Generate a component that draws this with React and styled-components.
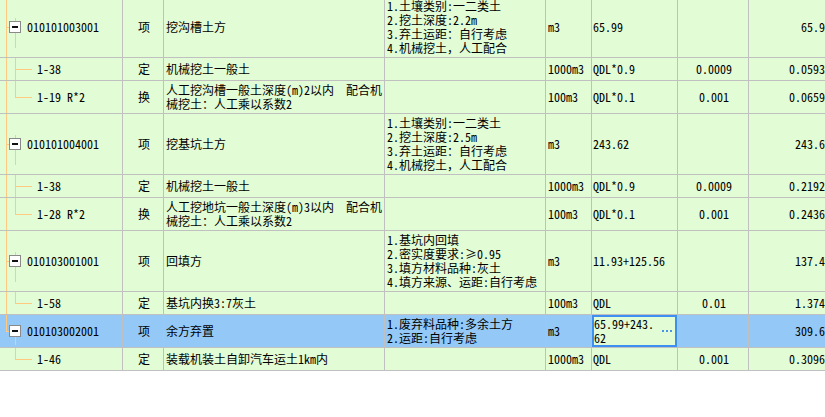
import React from "react";
import styled, { createGlobalStyle } from "styled-components";

const GlobalStyle = createGlobalStyle`
  *, *::before, *::after { box-sizing: border-box; }
  html, body { margin: 0; padding: 0; background: #ffffff; }
  body { overflow: hidden; }
`;

const FONT = `"Noto Sans Mono CJK SC", "Noto Sans CJK SC", "Liberation Mono", monospace`;
const GRID_LINE = "#c0c0c0";
const TREE = "#ffc97f";
const GREEN = "#e2fcd6";
const SELECTED = "#94c9f7";

const Viewport = styled.div`
  width: 825px;
  height: 417px;
  overflow: hidden;
  background: #ffffff;
  font-family: ${FONT};
  font-size: 12px;
  line-height: 14px;
  color: #000000;
`;

const Sheet = styled.div`
  width: 834px;
  margin-top: -3px;
`;

const Row = styled.div`
  display: grid;
  grid-template-columns: 123px 41px 221px 161px 46px 86px 71px 85px;
  border-bottom: 1px solid ${GRID_LINE};
  background: ${(p) => (p.$selected ? SELECTED : GREEN)};
`;

const Cell = styled.div`
  display: flex;
  align-items: center;
  justify-content: ${(p) =>
    p.$align === "center" ? "center" : p.$align === "right" ? "flex-end" : "flex-start"};
  min-height: 22px;
  padding: 2px ${(p) => (p.$align === "right" ? "2px" : "0")} 2px ${(p) => p.$padLeft ?? 2}px;
  border-right: 1px solid ${GRID_LINE};
  white-space: pre-wrap;
  overflow: hidden;
`;

const line = `linear-gradient(${TREE}, ${TREE})`;

function treeLayers(p) {
  const layers = [];
  if (p.$level === 0) {
    layers.push([`6px 0`, p.$lastRoot ? `1px 50%` : `1px 100%`]);
    layers.push([`6px 50%`, `3px 1px`]);
    if (p.$hasChildren) layers.push([`15px calc(50% + 6px)`, `1px 50%`]);
  } else {
    if (!p.$lastRoot) layers.push([`6px 0`, `1px 100%`]);
    layers.push([`15px 0`, p.$lastChild ? `1px 50%` : `1px 100%`]);
    layers.push([`15px 50%`, `17px 1px`]);
  }
  return `
    background-image: ${layers.map(() => line).join(", ")};
    background-position: ${layers.map((l) => l[0]).join(", ")};
    background-size: ${layers.map((l) => l[1]).join(", ")};
    background-repeat: no-repeat;
  `;
}

const CodeCell = styled(Cell)`
  padding-left: ${(p) => (p.$level === 0 ? "9px" : "37px")};
  ${(p) => treeLayers(p)}
`;

const Toggle = styled.span`
  flex: none;
  width: 12px;
  height: 12px;
  margin-right: 6px;
  border: 1px solid #8a8a8a;
  background: #ffffff;
  display: flex;
  align-items: center;
  justify-content: center;
  &::after {
    content: "";
    width: 6px;
    height: 2px;
    background: #111111;
  }
`;

const Editor = styled.div`
  flex: 1;
  align-self: stretch;
  display: flex;
  align-items: center;
  justify-content: space-between;
  margin: -2px 0;
  padding: 0 3px 0 0;
  border: 2px solid #3d8ff2;
  background: ${GREEN};
`;

const EditorText = styled.span`
  width: 62px;
  word-break: break-all;
  white-space: normal;
`;

const MoreDots = styled.span`
  display: flex;
  gap: 2px;
  align-self: center;
`;

const Dot = styled.i`
  width: 2px;
  height: 2px;
  background: #4a92ea;
`;

const rows = [
  {
    level: 0, code: "010101003001", type: "项", name: "挖沟槽土方",
    feat: "1.土壤类别:一二类土\n2.挖土深度:2.2m\n3.弃土运距：自行考虑\n4.机械挖土，人工配合",
    unit: "m3", expr: "65.99", qty: "", total: "65.99", hasChildren: true,
  },
  { level: 1, code: "1-38", type: "定", name: "机械挖土一般土", feat: "", unit: "1000m3", expr: "QDL*0.9", qty: "0.0009", total: "0.05939" },
  {
    level: 1, code: "1-19 R*2", type: "换", name: "人工挖沟槽一般土深度(m)2以内  配合机\n械挖土：人工乘以系数2",
    feat: "", unit: "100m3", expr: "QDL*0.1", qty: "0.001", total: "0.06599", lastChild: true,
  },
  {
    level: 0, code: "010101004001", type: "项", name: "挖基坑土方",
    feat: "1.土壤类别:一二类土\n2.挖土深度:2.5m\n3.弃土运距：自行考虑\n4.机械挖土，人工配合",
    unit: "m3", expr: "243.62", qty: "", total: "243.62", hasChildren: true,
  },
  { level: 1, code: "1-38", type: "定", name: "机械挖土一般土", feat: "", unit: "1000m3", expr: "QDL*0.9", qty: "0.0009", total: "0.21926" },
  {
    level: 1, code: "1-28 R*2", type: "换", name: "人工挖地坑一般土深度(m)3以内  配合机\n械挖土：人工乘以系数2",
    feat: "", unit: "100m3", expr: "QDL*0.1", qty: "0.001", total: "0.24362", lastChild: true,
  },
  {
    level: 0, code: "010103001001", type: "项", name: "回填方",
    feat: "1.基坑内回填\n2.密实度要求:≥0.95\n3.填方材料品种:灰土\n4.填方来源、运距:自行考虑",
    unit: "m3", expr: "11.93+125.56", qty: "", total: "137.49", hasChildren: true,
  },
  { level: 1, code: "1-58", type: "定", name: "基坑内换3:7灰土", feat: "", unit: "100m3", expr: "QDL", qty: "0.01", total: "1.3749", lastChild: true },
  {
    level: 0, code: "010103002001", type: "项", name: "余方弃置",
    feat: "1.废弃料品种:多余土方\n2.运距:自行考虑",
    unit: "m3", expr: "65.99+243.62", qty: "", total: "309.61", hasChildren: true, lastRoot: true, selected: true, editing: true,
  },
  {
    level: 1, code: "1-46", type: "定", name: "装载机装土自卸汽车运土1km内", feat: "", unit: "1000m3", expr: "QDL", qty: "0.001", total: "0.30961",
    lastChild: true, lastRoot: true,
  },
];

export default function App() {
  return (
    <Viewport>
      <GlobalStyle />
      <Sheet>
        {rows.map((r, i) => (
          <Row key={i} $selected={r.selected}>
            <CodeCell
              $level={r.level}
              $lastRoot={r.lastRoot}
              $lastChild={r.lastChild}
              $hasChildren={r.hasChildren}
            >
              {r.level === 0 && <Toggle />}
              {r.code}
            </CodeCell>
            <Cell $align="center">{r.type}</Cell>
            <Cell>{r.name}</Cell>
            <Cell>{r.feat}</Cell>
            <Cell>{r.unit}</Cell>
            {r.editing ? (
              <Cell $padLeft={0}>
                <Editor>
                  <EditorText>{r.expr}</EditorText>
                  <MoreDots>
                    <Dot />
                    <Dot />
                    <Dot />
                  </MoreDots>
                </Editor>
              </Cell>
            ) : (
              <Cell $padLeft={1}>{r.expr}</Cell>
            )}
            <Cell $align="center">{r.qty}</Cell>
            <Cell $align="right">{r.total}</Cell>
          </Row>
        ))}
      </Sheet>
    </Viewport>
  );
}
